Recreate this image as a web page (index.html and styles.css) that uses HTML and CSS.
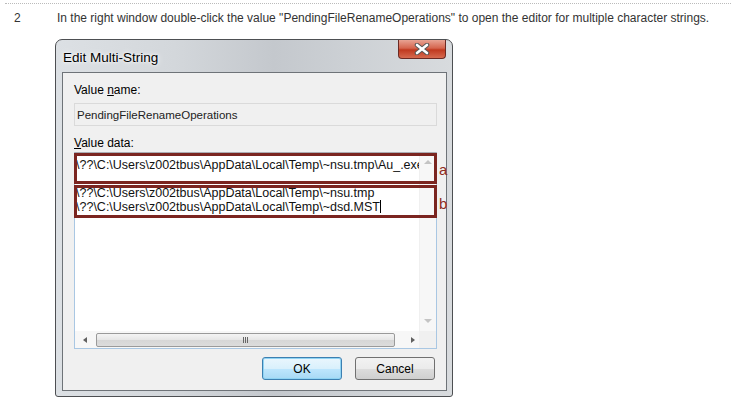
FILE: index.html
```html
<!DOCTYPE html>
<html lang="en">
<head>
    <meta charset="UTF-8">
    <title>Step 2</title>
    <link rel="stylesheet" href="styles.css">
</head>
<body>
    <div class="step">
        <div class="step-num">2</div>
        <div class="step-body">
            <p class="step-text">In the right window double-click the value "PendingFileRenameOperations" to open the editor for multiple character strings.</p>

            <div class="dialog">
                <div class="titlebar">
                    <span class="title">Edit Multi-String</span>
                    <span class="close">
                        <svg width="16" height="12" viewBox="0 0 16 12">
                            <path d="M3 2 L13 10 M13 2 L3 10" stroke="#555" stroke-width="4.5" stroke-linecap="round"/>
                            <path d="M3 2 L13 10 M13 2 L3 10" stroke="#fff" stroke-width="2.6" stroke-linecap="round"/>
                        </svg>
                    </span>
                </div>
                <div class="client">
                    <div class="label">Value <u>n</u>ame:</div>
                    <div class="field">PendingFileRenameOperations</div>
                    <div class="label label-data"><u>V</u>alue data:</div>

                    <div class="data-wrap">
                        <div class="editbox">
                            <div class="edit-text">\??\C:\Users\z002tbus\AppData\Local\Temp\~nsu.tmp\Au_.exe

\??\C:\Users\z002tbus\AppData\Local\Temp\~nsu.tmp
\??\C:\Users\z002tbus\AppData\Local\Temp\~dsd.MST<span class="caret"></span></div>
                            <div class="vscroll">
                                <span class="arrow arrow-up"></span>
                                <span class="arrow arrow-down"></span>
                            </div>
                            <div class="hscroll">
                                <span class="arrow arrow-left"></span>
                                <span class="thumb"><span class="grip"></span><span class="grip"></span><span class="grip"></span></span>
                                <span class="arrow arrow-right"></span>
                            </div>
                            <div class="corner"></div>
                        </div>
                        <!-- annotation boxes drawn over the edit box -->
                        <div class="mark mark-a"></div>
                        <div class="mark mark-b"></div>
                        <span class="mark-label label-a">a</span>
                        <span class="mark-label label-b">b</span>
                    </div>

                    <div class="buttons">
                        <button class="btn btn-default">OK</button>
                        <button class="btn">Cancel</button>
                    </div>
                </div>
            </div>
        </div>
    </div>
</body>
</html>
```

FILE: styles.css
```css
body {
    margin: 0;
    background: #fff;
    font-family: "Liberation Sans", Arial, sans-serif;
    color: #333;
}

.step {
    display: flex;
    margin: 3px 0 0 5px;
    border-top: 1px dotted #bbb;
    padding-top: 7px;
}

.step-num {
    width: 52px;
    padding-left: 9px;
    box-sizing: border-box;
    font-size: 12px;
    line-height: 14px;
}

.step-text {
    margin: 0 0 14px 0;
    font-size: 12px;
    line-height: 14px;
}

/* window */
.dialog {
    width: 398px;
    height: 358px;
    box-sizing: border-box;
    margin-left: -2px;
    border: 1px solid #4d4f52;
    border-radius: 7px 7px 3px 3px;
    padding: 0 5px 5px 6px;
    background: linear-gradient(to right, #dce0e4 0%, #d3d7db 30%, #c4c8cd 55%, #cdd1d5 75%, #d8dbde 100%);
    display: flex;
    flex-direction: column;
    color: #000;
}

.titlebar {
    height: 32px;
    display: flex;
    justify-content: space-between;
    align-items: flex-start;
}

.title {
    margin-top: 10px;
    margin-left: 1px;
    font-size: 13.5px;
    line-height: 15px;
    text-shadow: 0 0 6px #fff, 0 0 3px #fff;
}

.close {
    width: 48px;
    height: 19px;
    margin-right: 1px;
    border: 1px solid #6b2a23;
    border-top: none;
    border-radius: 0 0 4px 4px;
    background: linear-gradient(to bottom, #e8a393 0%, #d5654e 45%, #c0391f 55%, #d66a4f 100%);
    display: flex;
    align-items: center;
    justify-content: center;
    box-sizing: border-box;
}

.client {
    flex: 1;
    border: 1px solid #6e7378;
    background: #f0f0f0;
    padding: 10px 9px 0 11px;
    font-size: 12px;
}

.label {
    line-height: 14px;
    margin-bottom: 6px;
}

.label-data {
    margin-top: 10px;
    margin-bottom: 2px;
}

.field {
    width: 363px;
    height: 23px;
    box-sizing: border-box;
    border: 1px solid #dadada;
    background: #f0f0f0;
    padding: 4px 2px;
    line-height: 14px;
    font-size: 11.5px;
    color: #222;
}

.data-wrap {
    position: relative;
    width: 363px;
}

.editbox {
    height: 197px;
    box-sizing: border-box;
    border: 1px solid #a9c7e3;
    border-top-color: #abadb3;
    background: #fff;
    display: grid;
    grid-template-columns: 1fr 17px;
    grid-template-rows: 1fr 17px;
}

.edit-text {
    overflow: hidden;
    white-space: pre;
    padding: 5px 0 0 1px;
    line-height: 14px;
    font-size: 12.5px;
    color: #111;
}

.caret {
    display: inline-block;
    width: 1px;
    height: 13px;
    background: #000;
    vertical-align: -2px;
}

.vscroll {
    background: #f7f7f7;
    border-left: 1px solid #f0f0f0;
    display: flex;
    flex-direction: column;
    justify-content: space-between;
    align-items: center;
    padding: 7px 0 8px;
}

.hscroll {
    background: #f7f7f7;
    display: flex;
    align-items: center;
    padding: 0 4px 0 8px;
}

.corner {
    background: #f0f0f0;
}

.arrow {
    width: 0;
    height: 0;
    border: 4px solid transparent;
}

.arrow-up {
    border-bottom-color: #c4c4c4;
    border-top-width: 0;
}

.arrow-down {
    border-top-color: #c4c4c4;
    border-bottom-width: 0;
}

.arrow-left {
    border-right-color: #606060;
    border-left-width: 0;
    border-top-width: 3px;
    border-bottom-width: 3px;
}

.arrow-right {
    border-left-color: #606060;
    border-right-width: 0;
    border-top-width: 3px;
    border-bottom-width: 3px;
}

.thumb {
    flex: 1;
    height: 14px;
    margin: 0 16px 0 9px;
    border: 1px solid #9a9a9a;
    border-radius: 2px;
    background: linear-gradient(to bottom, #f4f4f4 0%, #e6e6e6 50%, #d6d6d6 51%, #dcdcdc 100%);
    display: flex;
    align-items: center;
    justify-content: center;
    gap: 1px;
    box-sizing: border-box;
}

.grip {
    width: 1px;
    height: 6px;
    background: #666;
}

.mark {
    position: absolute;
    left: 0;
    width: 363px;
    box-sizing: border-box;
    border: 3px solid #7b2520;
}

.mark-a {
    top: 1px;
    height: 31px;
}

.mark-b {
    top: 33px;
    height: 33px;
}

.mark-label {
    position: absolute;
    left: 365px;
    font-size: 15px;
    line-height: 16px;
    color: #8e2b20;
}

.label-a {
    top: 10px;
}

.label-b {
    top: 44px;
}

.buttons {
    display: flex;
    justify-content: flex-end;
    gap: 13px;
    width: 361px;
    margin-top: 8px;
}

.btn {
    width: 80px;
    height: 23px;
    border: 1px solid #707070;
    border-radius: 3px;
    background: linear-gradient(to bottom, #f2f2f2 0%, #ebebeb 50%, #dddddd 51%, #cfcfcf 100%);
    font-family: "Liberation Sans", Arial, sans-serif;
    font-size: 12px;
    color: #000;
    padding: 0;
}

.btn-default {
    border-color: #3c7fb1;
    background: linear-gradient(to bottom, #eaf6fd 0%, #d9f0fc 50%, #bee6fd 51%, #a7d9f5 100%);
    box-shadow: inset 0 0 0 1px #8fd3f3;
}
```
